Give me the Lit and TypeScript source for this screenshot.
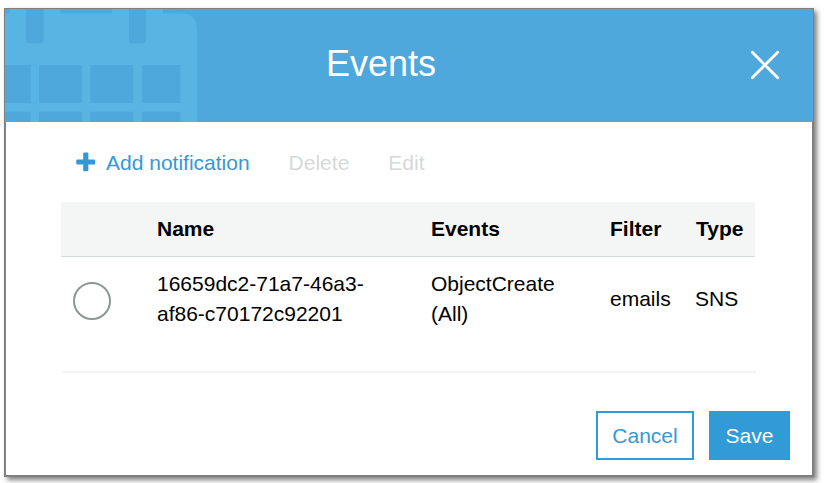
import { LitElement, html, css } from "lit";
import { customElement, property } from "lit/decorators.js";

interface Notification {
  name: string;
  events: string;
  filter: string;
  type: string;
}

@customElement("app-root")
export class AppRoot extends LitElement {
  @property({ attribute: false })
  rows: Notification[] = [
    {
      name: "16659dc2-71a7-46a3-af86-c70172c92201",
      events: "ObjectCreate (All)",
      filter: "emails",
      type: "SNS",
    },
  ];

  static styles = css`
    :host {
      display: block;
      box-sizing: border-box;
      height: 483px;
      padding: 8px 10px 6px 4px;
      overflow: hidden;
      background: #fff;
      color: #000;
      font: 21px/30px "Liberation Sans", Arial, sans-serif;
    }
    * {
      box-sizing: border-box;
    }
    .dialog {
      display: flex;
      flex-direction: column;
      height: 469px;
      border: 1px solid #808080;
      background: #fff;
      box-shadow: 3px 3px 5px rgba(0, 0, 0, 0.5);
    }
    .header {
      display: grid;
      grid-template-columns: 193px 1fr 193px;
      flex: none;
      height: 113px;
      background: #4ea8dc;
    }
    .calendar {
      display: block;
      width: 193px;
      height: 113px;
    }
    .title {
      margin: 0 0 0 128px;
      padding-top: 35px;
      font-size: 36px;
      line-height: 40px;
      font-weight: 400;
      color: #fff;
    }
    .close {
      justify-self: end;
      width: 30px;
      height: 30px;
      margin: 41px 33px 0 0;
      padding: 0;
      border: 0;
      background: none;
    }
    .close svg {
      display: block;
    }
    .body {
      flex: 1;
      display: flex;
      flex-direction: column;
      border: solid #808080;
      border-width: 0 1px 1px;
      padding: 26px 56px 0 55px;
    }
    .toolbar {
      display: flex;
      align-items: center;
      height: 30px;
      padding-left: 15px;
      color: #d5d9d9;
    }
    .action {
      display: flex;
      align-items: center;
      white-space: nowrap;
    }
    .add {
      gap: 10px;
      margin-right: 39px;
      color: #3598d6;
    }
    .add svg {
      margin-bottom: 2px;
    }
    .delete {
      margin-right: 39px;
    }
    .row {
      display: grid;
      grid-template-columns: 96px 274px 179px 86px 1fr;
      align-items: center;
    }
    .head {
      height: 55px;
      margin: 24px 1px 0 0;
      border-bottom: 1px solid #d5dbdb;
      background: #f4f6f6;
      font-weight: 700;
    }
    .item {
      grid-template-columns: 96px 274px 179px 85px 1fr;
      height: 116px;
      padding-bottom: 30px;
      border-bottom: 2px solid #f4f4f4;
    }
    .name {
      width: 215px;
    }
    .events {
      width: 130px;
    }
    .radio {
      width: 38px;
      height: 38px;
      margin: 4px 0 0 12px;
      border: 2px solid #8f9696;
      border-radius: 50%;
    }
    .footer {
      display: flex;
      justify-content: flex-end;
      gap: 15px;
      margin: 38px -34px 0 0;
    }
    .button {
      height: 49px;
      padding: 0;
      border: 2px solid #329ad6;
      font: inherit;
    }
    .cancel {
      width: 98px;
      background: #fff;
      color: #3598d6;
    }
    .save {
      width: 81px;
      background: #329ad6;
      color: #fff;
    }
  `;

  render() {
    return html`
      <section class="dialog">
        <header class="header">
          <svg class="calendar" viewBox="5 9 193 113" aria-hidden="true">
            <path
              fill="#57b4e3"
              d="M5 13.3H9.5V9H60.5V13.3H112V9H163V13.3H180Q197.3 13.3 197.3 31V122H5Z"
            />
            <g fill="#4ea8dc">
              <path d="M26 9H43.7V39.5Q43.7 43.3 40 43.3H30Q26 43.3 26 39.5Z" />
              <path d="M129 9H146V39.5Q146 43.3 142 43.3H133Q129 43.3 129 39.5Z" />
              <path
                d="M5 65H30.7V103H5ZM39 65H82V103H39ZM90.3 65H133.3V103H90.3ZM142 65H180.3V103H142Z"
              />
              <path
                d="M5 111.7H30.7V122H5ZM39 111.7H82V122H39ZM90.3 111.7H133.3V122H90.3ZM142 111.7H180.3V122H142Z"
              />
            </g>
          </svg>
          <h1 class="title">Events</h1>
          <button class="close" aria-label="Close">
            <svg width="30" height="30" viewBox="0 0 30 30">
              <path
                d="M2.3 2.3L27.7 27.7M27.7 2.3L2.3 27.7"
                stroke="#fff"
                stroke-width="2.8"
                stroke-linecap="round"
              />
            </svg>
          </button>
        </header>
        <div class="body">
          <nav class="toolbar">
            <span class="action add">
              <svg width="20" height="20" viewBox="0 0 20 20">
                <path
                  fill="#3598d6"
                  d="M8.2 .5H11.4Q12.4 .5 12.4 1.5V7.4H18.2Q19.2 7.4 19.2 8.4V11.4Q19.2 12.4 18.2 12.4H12.4V18.2Q12.4 19.2 11.4 19.2H8.2Q7.2 19.2 7.2 18.2V12.4H1.3Q.3 12.4 .3 11.4V8.4Q.3 7.4 1.3 7.4H7.2V1.5Q7.2 .5 8.2 .5Z"
                />
              </svg>
              Add notification
            </span>
            <span class="action delete">Delete</span>
            <span class="action">Edit</span>
          </nav>
          <div class="row head">
            <span></span><span>Name</span><span>Events</span><span>Filter</span
            ><span>Type</span>
          </div>
          ${this.rows.map(
            (r) => html`
              <div class="row item">
                <span class="radio"></span>
                <span class="name">${r.name}</span>
                <span class="events">${r.events}</span>
                <span>${r.filter}</span>
                <span>${r.type}</span>
              </div>
            `
          )}
          <footer class="footer">
            <button class="button cancel">Cancel</button>
            <button class="button save">Save</button>
          </footer>
        </div>
      </section>
    `;
  }
}
